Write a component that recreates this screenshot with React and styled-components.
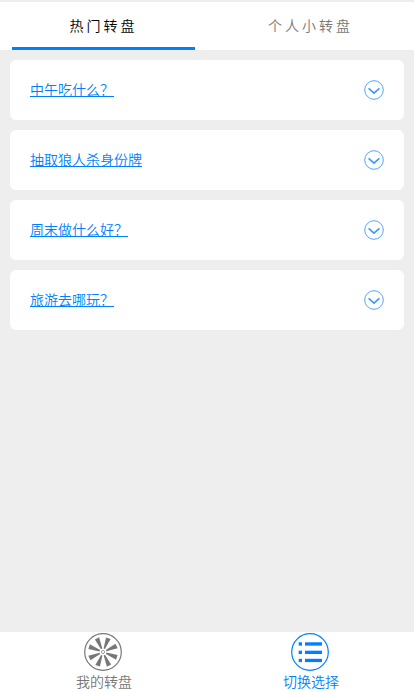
import React, { useState } from 'react';
import styled, { createGlobalStyle } from 'styled-components';

const GlobalStyle = createGlobalStyle`
    body {
        margin: 0;
        background: #eee;
        font-family: "Liberation Sans", "Noto Sans CJK SC", sans-serif;
        font-size: 14px;
        font-weight: 350;
    }
`;

const Page = styled.div`
    display: flex;
    flex-direction: column;
    height: 100vh;
    box-sizing: border-box;
    padding-top: 2px;
`;

const Tabs = styled.div`
    display: flex;
    height: 48px;
    background: #fff;
`;

const Tab = styled.div`
    flex: 1;
    display: flex;
    flex-direction: column;
    padding: 0 12px;
    color: ${props => (props.$active ? '#000' : '#777')};
    cursor: pointer;
`;

const TabTitle = styled.div`
    line-height: 48px;
    height: 45px;
    letter-spacing: 3px;
    text-align: center;
`;

const TabLine = styled.div`
    height: 3px;
    background: ${props => (props.$active ? '#007fff' : 'transparent')};
`;

const List = styled.div`
    flex: 1;
    display: flex;
    flex-direction: column;
    gap: 10px;
    padding: 10px;
`;

const Card = styled.div`
    display: flex;
    align-items: center;
    justify-content: space-between;
    height: 60px;
    padding: 0 20px;
    box-sizing: border-box;
    background: #fff;
    border-radius: 6px;
`;

const CardTitle = styled.span`
    color: #007fff;
    line-height: 20px;
    text-decoration: underline;
    text-decoration-thickness: 1px;
    text-underline-offset: 1px;
    text-decoration-skip-ink: none;
    cursor: pointer;
`;

const Footer = styled.div`
    display: flex;
    height: 60px;
    background: #fff;
`;

const FooterItem = styled.div`
    flex: 1;
    display: flex;
    flex-direction: column;
    align-items: center;
    color: ${props => (props.$active ? '#007fff' : '#777')};
    cursor: pointer;
`;

const FooterIcon = styled.svg`
    width: 40px;
    height: 40px;
    margin-right: 1px;
`;

const FooterText = styled.div`
    line-height: 20px;
    padding-left: 1px;
`;

const ArrowIcon = () => (
    <svg width="20" height="20" viewBox="0 0 20 20" fill="none" stroke="#3d9aff">
        <circle cx="10" cy="10" r="9.3" strokeWidth="0.9" />
        <path d="M4.6 8.3L10 13.2L15.4 8.3" strokeWidth="1.7" />
    </svg>
);

const WheelIcon = () => (
    <FooterIcon viewBox="0 0 40 40">
        <circle cx="20" cy="20" r="18.3" fill="none" stroke="currentColor" strokeWidth="1.2" />
        <circle cx="20" cy="20" r="1.6" fill="none" stroke="currentColor" strokeWidth="0.7" />
        {[0, 45, 90, 135, 180, 225, 270, 315].map(angle => (
            <path
                key={angle}
                d="M19.3 16.6L17.5 5.3L22.3 5L20.7 16.6Z"
                fill="currentColor"
                transform={`rotate(${angle + 21.5} 20 20)`}
            />
        ))}
    </FooterIcon>
);

const ListIcon = () => (
    <FooterIcon viewBox="0 0 40 40">
        <circle cx="20" cy="20" r="18.3" fill="none" stroke="currentColor" strokeWidth="1.2" />
        {[10.3, 18.7, 26.8].map(y => (
            <React.Fragment key={y}>
                <rect x="8.7" y={y} width="3.3" height="3.3" fill="currentColor" />
                <rect x="15" y={y} width="17" height="3.3" fill="currentColor" />
            </React.Fragment>
        ))}
    </FooterIcon>
);

const tabs = ['热门转盘', '个人小转盘'];
const wheels = ['中午吃什么？', '抽取狼人杀身份牌', '周末做什么好？', '旅游去哪玩？'];

export default () => {
    const [current, setCurrent] = useState(0);

    return (
        <Page>
            <GlobalStyle />
            <Tabs>
                {tabs.map((title, index) => (
                    <Tab key={title} $active={index === current} onClick={() => setCurrent(index)}>
                        <TabTitle>{title}</TabTitle>
                        <TabLine $active={index === current} />
                    </Tab>
                ))}
            </Tabs>
            <List>
                {wheels.map(title => (
                    <Card key={title}>
                        <CardTitle>{title}</CardTitle>
                        <ArrowIcon />
                    </Card>
                ))}
            </List>
            <Footer>
                <FooterItem>
                    <WheelIcon />
                    <FooterText>我的转盘</FooterText>
                </FooterItem>
                <FooterItem $active>
                    <ListIcon />
                    <FooterText>切换选择</FooterText>
                </FooterItem>
            </Footer>
        </Page>
    )
}
